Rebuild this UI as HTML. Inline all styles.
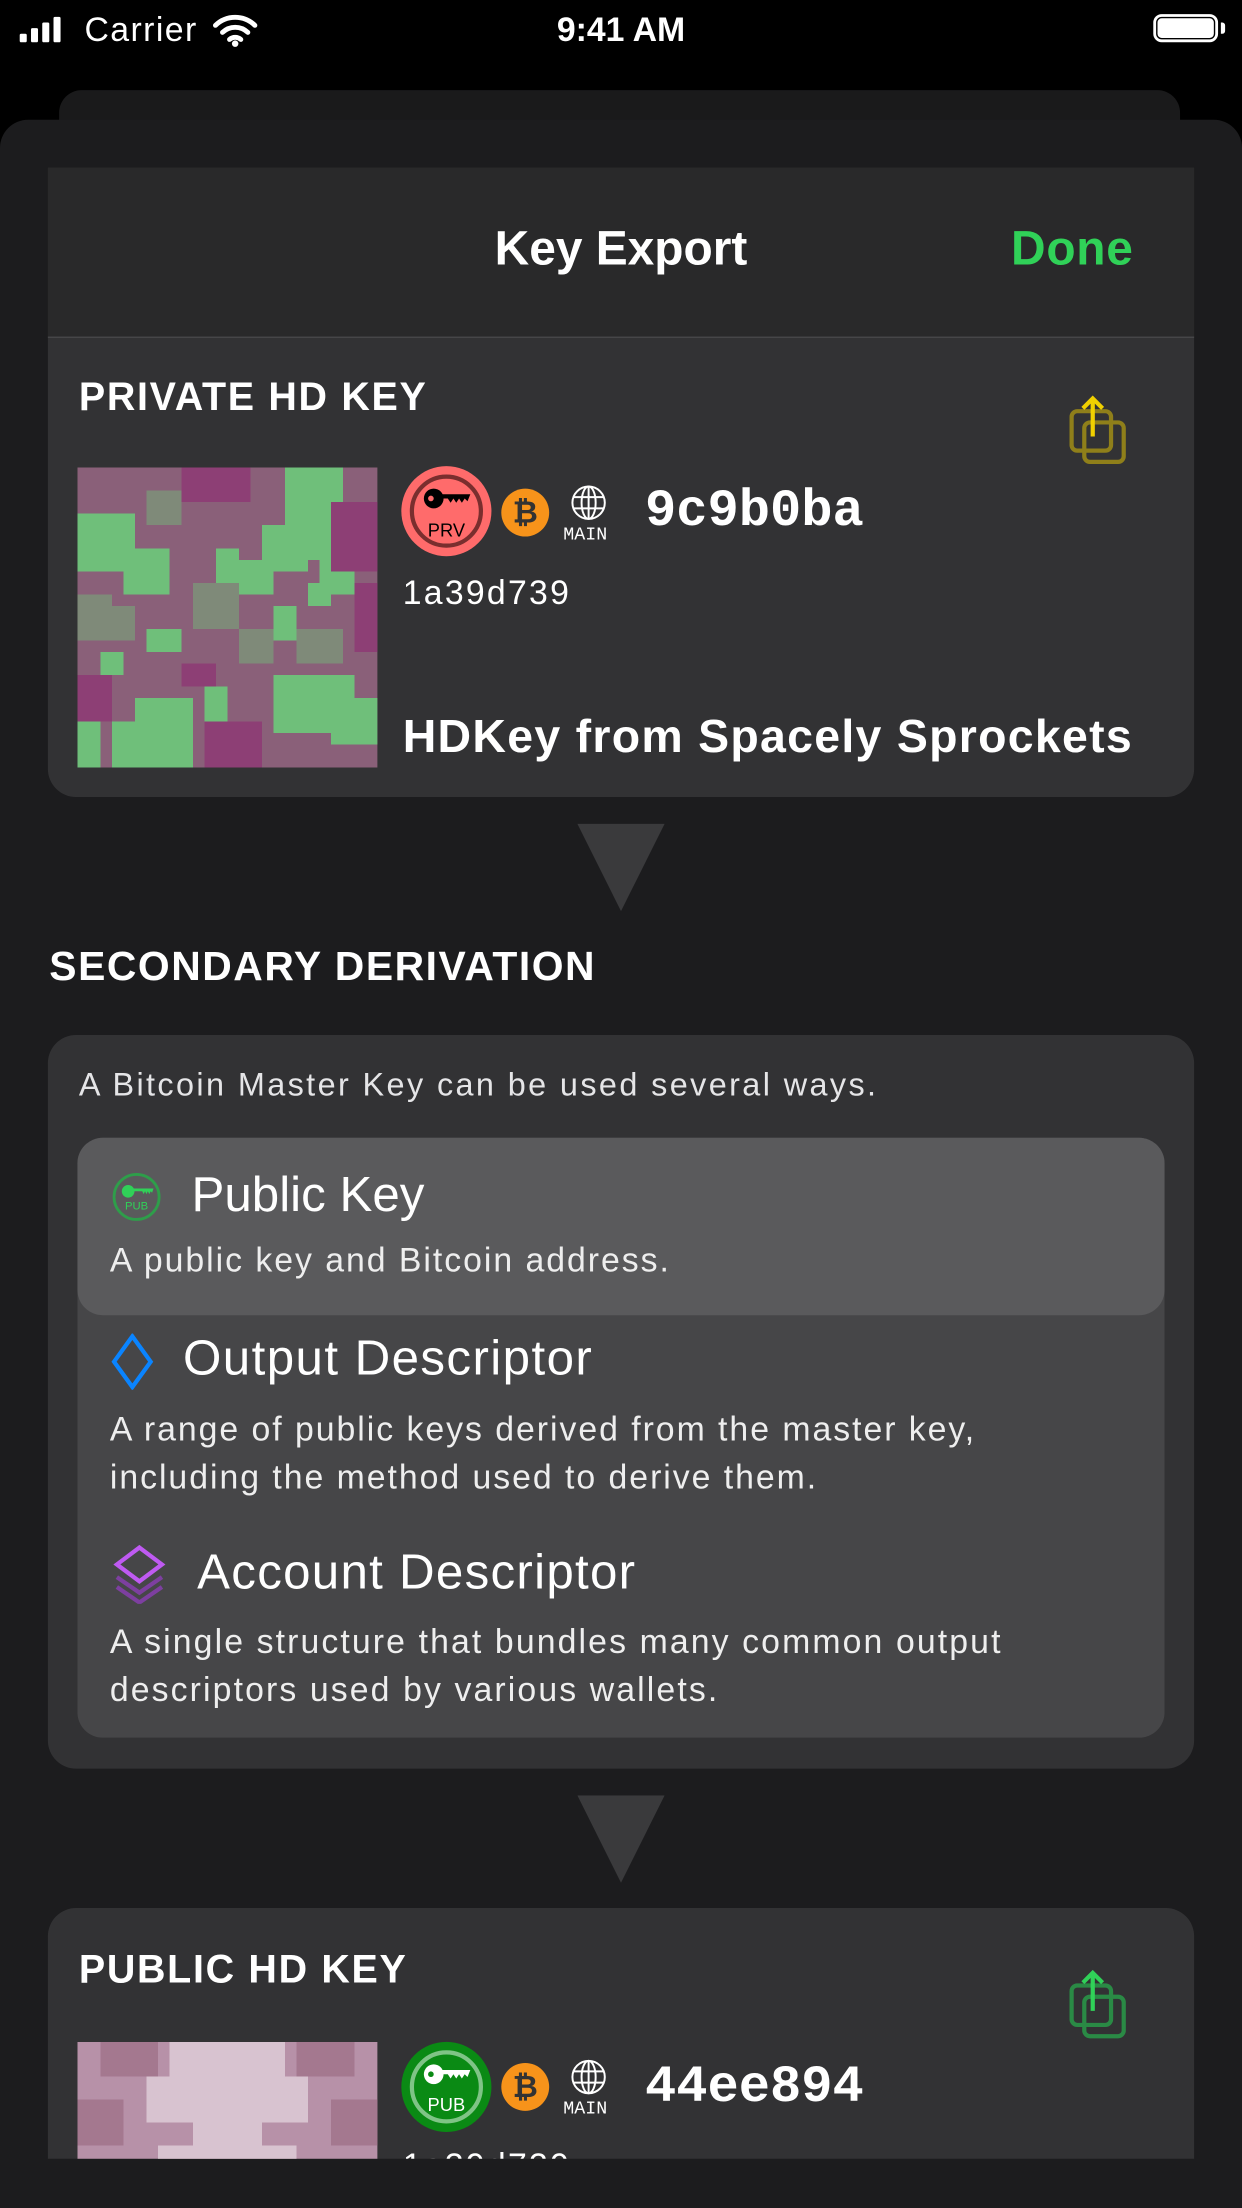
<!DOCTYPE html>
<html><head><meta charset="utf-8"><style>
html,body{margin:0;padding:0;background:#000;width:1242px;height:2208px;overflow:hidden}
#w{position:absolute;left:0;top:0;width:882px;height:1568px;overflow:hidden;transform:scale(1.408163);transform-origin:0 0;font-family:"Liberation Sans",sans-serif;color:#fff}
.a{position:absolute;white-space:nowrap}
.card{position:absolute;left:34px;width:814px;background:#323234;border-radius:20px}
.mono{font-family:"Liberation Mono","DejaVu Sans Mono",monospace}
</style></head><body><div id="w">
<div class="a" style="left:14px;top:12px;display:flex;align-items:flex-end;gap:3px">
<div style="width:5px;height:6px;background:#fff;border-radius:1px"></div><div style="width:5px;height:10px;background:#fff;border-radius:1px"></div><div style="width:5px;height:14px;background:#fff;border-radius:1px"></div><div style="width:5px;height:18px;background:#fff;border-radius:1px"></div></div>
<div class="a" style="left:60px;top:8px;font-size:24px;letter-spacing:1px">Carrier</div>
<svg class="a" style="left:150px;top:8px" width="34" height="26" viewBox="0 0 34 26"><path d="M3 10a20 20 0 0 1 28 0M8 15a13 13 0 0 1 18 0M13 20a6 6 0 0 1 8 0" stroke="#fff" stroke-width="3.5" fill="none" stroke-linecap="round"/><circle cx="17" cy="23" r="2.3" fill="#fff"/></svg>
<div class="a" style="left:0;width:882px;top:8px;text-align:center;font-size:24px;font-weight:bold">9:41 AM</div>
<div class="a" style="left:819px;top:10px;width:46px;height:20px;border:2px solid #fff;border-radius:6px;box-sizing:border-box"></div>
<div class="a" style="left:822px;top:13px;width:40px;height:14px;background:#fff;border-radius:3px"></div>
<div class="a" style="left:867px;top:16px;width:3px;height:8px;background:#fff;border-radius:0 2px 2px 0"></div>
<div class="a" style="left:42px;top:64px;width:796px;height:60px;background:#1a1a1b;border-radius:16px"></div>
<div class="a" style="left:0;top:85px;width:882px;height:1483px;background:#1c1c1e;border-radius:20px 20px 0 0"></div>
<div class="a" style="left:34px;top:119px;width:814px;height:120px;background:#29292a;border-bottom:1px solid #48484a"></div>
<div class="a" style="left:0;width:882px;top:158px;text-align:center;font-size:34px;font-weight:bold">Key Export</div>
<div class="a" style="left:718px;top:158px;font-size:34px;font-weight:bold;color:#30d158;letter-spacing:0.5px">Done</div>
<div class="card" style="top:240px;height:326px;border-radius:0 0 20px 20px"></div>
<div class="a" style="left:56px;top:266px;font-size:28px;font-weight:bold;letter-spacing:1.2px">PRIVATE HD KEY</div>
<svg class="a" style="left:756px;top:280px" width="48" height="52" viewBox="0 0 48 52"><rect x="5" y="12" width="28" height="28" rx="4" fill="none" stroke="#8f7f1a" stroke-width="3"/><rect x="14" y="20" width="28" height="28" rx="4" fill="none" stroke="#8f7f1a" stroke-width="3"/><path d="M20 30V3M13 10l7-7 7 7" stroke="#f0d000" stroke-width="3" fill="none"/></svg>
<svg class="a" style="left:55px;top:332px" width="213" height="213" viewBox="0 0 26 26" shape-rendering="crispEdges">
<rect width="26" height="26" fill="#8a6079"/>
<g fill="#6fbf7a"><rect x="0" y="4" width="5" height="5"/><rect x="4" y="7" width="4" height="4"/><rect x="18" y="0" width="5" height="8"/><rect x="16" y="5" width="4" height="4"/><rect x="21" y="7" width="3" height="4"/><rect x="14" y="8" width="3" height="3"/><rect x="12" y="7" width="2" height="4"/><rect x="17" y="12" width="2" height="3"/><rect x="6" y="14" width="3" height="2"/><rect x="0" y="21" width="2" height="5"/><rect x="5" y="20" width="5" height="6"/><rect x="3" y="22" width="3" height="4"/><rect x="17" y="18" width="7" height="5"/><rect x="22" y="20" width="4" height="4"/><rect x="11" y="19" width="2" height="4"/><rect x="20" y="10" width="2" height="2"/><rect x="2" y="16" width="2" height="2"/></g>
<g fill="#8d3f75"><rect x="9" y="0" width="6" height="3"/><rect x="22" y="3" width="4" height="6"/><rect x="24" y="10" width="2" height="6"/><rect x="0" y="18" width="3" height="4"/><rect x="11" y="22" width="5" height="4"/><rect x="9" y="17" width="3" height="2"/></g>
<g fill="#7f8a79"><rect x="6" y="2" width="3" height="3"/><rect x="10" y="10" width="4" height="4"/><rect x="0" y="11" width="3" height="4"/><rect x="19" y="14" width="4" height="3"/><rect x="14" y="14" width="3" height="3"/><rect x="3" y="12" width="2" height="3"/></g>
</svg>
<div class="a" style="left:285px;top:331px;width:64px;height:64px;border-radius:50%;background:#ff6b6b"></div>
<div class="a" style="left:291px;top:337px;width:52px;height:52px;border-radius:50%;border:3px solid #7a2e2e;box-sizing:border-box"></div>
<svg class="a" style="left:300px;top:344px" width="36" height="22" viewBox="0 0 36 22"><circle cx="8" cy="10" r="7" fill="#000"/><circle cx="6" cy="10" r="2" fill="#ff6b6b"/><path d="M12 7h22l-2 5-2-2-2 3-2-3-2 3-2-3-2 3-2-3h-6z" fill="#000"/></svg>
<div class="a" style="left:285px;top:369px;width:64px;text-align:center;font-size:13px;color:#000">PRV</div>
<div class="a" style="left:356px;top:347px;width:34px;height:34px;border-radius:50%;background:#f7931a;text-align:center;font-weight:bold;font-size:22px;line-height:34px;color:#333">₿</div>
<svg class="a" style="left:405px;top:344px" width="26" height="26" viewBox="0 0 26 26" fill="none" stroke="#fff" stroke-width="1.4"><circle cx="13" cy="13" r="11.5"/><ellipse cx="13" cy="13" rx="5" ry="11.5"/><path d="M13 1.5v23M2 9h22M2 17h22"/></svg>
<div class="a mono" style="left:400px;top:372px;font-size:13px">MAIN</div>
<div class="a mono" style="left:458px;top:343px;font-size:37px;font-weight:bold">9c9b0ba</div>
<div class="a" style="left:286px;top:408px;font-size:24px;letter-spacing:1.6px">1a39d739</div>
<div class="a" style="left:286px;top:504px;font-size:33px;font-weight:bold;letter-spacing:0.9px">HDKey from Spacely Sprockets</div>
<svg class="a" style="left:410px;top:585px" width="62" height="62"><path d="M0 0h62L31 62z" fill="#3a3a3c"/></svg>
<div class="a" style="left:35px;top:671px;font-size:29px;font-weight:bold;letter-spacing:1.1px">SECONDARY DERIVATION</div>
<div class="card" style="top:735px;height:521px"></div>
<div class="a" style="left:56px;top:757px;font-size:23px;color:#e5e5e7;letter-spacing:1.7px">A Bitcoin Master Key can be used several ways.</div>
<div class="a" style="left:55px;top:808px;width:772px;height:426px;background:#464648;border-radius:18px"></div>
<div class="a" style="left:55px;top:808px;width:772px;height:126px;background:#5a5a5c;border-radius:18px"></div>
<div class="a" style="left:80px;top:833px;width:34px;height:34px;border-radius:50%;border:2.5px solid #2e9e4a;box-sizing:border-box"></div>
<svg class="a" style="left:86px;top:840px" width="24" height="14" viewBox="0 0 24 14"><circle cx="5" cy="6" r="4.5" fill="#30d158"/><path d="M8 4h15l-1 3-1-1-1 2-1-2-1 2-1-2-1 2-1-2h-6z" fill="#30d158"/></svg>
<div class="a" style="left:80px;top:852px;width:34px;text-align:center;font-size:8px;color:#30d158">PUB</div>
<div class="a" style="left:136px;top:829px;font-size:35px">Public Key</div>
<div class="a" style="left:78px;top:882px;font-size:24px;color:#eee;letter-spacing:1.4px">A public key and Bitcoin address.</div>
<svg class="a" style="left:78px;top:947px" width="32" height="40" viewBox="0 0 32 40"><path d="M16 2L29 20 16 38 3 20z" fill="none" stroke="#0a84ff" stroke-width="3"/></svg>
<div class="a" style="left:130px;top:945px;font-size:35px;letter-spacing:1px">Output Descriptor</div>
<div class="a" style="left:78px;top:999px;font-size:24px;line-height:34px;color:#eee;letter-spacing:1.4px">A range of public keys derived from the master key,<br>including the method used to derive them.</div>
<svg class="a" style="left:78px;top:1097px" width="42" height="42" viewBox="0 0 42 42"><path d="M21 2L37 14 21 26 5 14z" fill="none" stroke="#bf5af2" stroke-width="3"/><path d="M5 23l16 11 16-11M5 30l16 11 16-11" fill="none" stroke="#7d3fa0" stroke-width="3"/></svg>
<div class="a" style="left:140px;top:1097px;font-size:35px;letter-spacing:0.9px">Account Descriptor</div>
<div class="a" style="left:78px;top:1150px;font-size:24px;line-height:34px;color:#eee;letter-spacing:1.5px">A single structure that bundles many common output<br>descriptors used by various wallets.</div>
<svg class="a" style="left:410px;top:1275px" width="62" height="62"><path d="M0 0h62L31 62z" fill="#3a3a3c"/></svg>
<div style="position:absolute;left:0;top:1355px;width:882px;height:178px;overflow:hidden">
<div class="card" style="top:0;height:260px"></div>
<div class="a" style="left:56px;top:28px;font-size:28px;font-weight:bold;letter-spacing:1.2px">PUBLIC HD KEY</div>
<svg class="a" style="left:756px;top:43px" width="48" height="52" viewBox="0 0 48 52"><rect x="5" y="12" width="28" height="28" rx="4" fill="none" stroke="#2a8a45" stroke-width="3"/><rect x="14" y="20" width="28" height="28" rx="4" fill="none" stroke="#2a8a45" stroke-width="3"/><path d="M20 30V3M13 10l7-7 7 7" stroke="#30d158" stroke-width="3" fill="none"/></svg>
<svg class="a" style="left:55px;top:95px" width="213" height="213" viewBox="0 0 26 26" shape-rendering="crispEdges">
<rect width="26" height="26" fill="#b791a8"/>
<g fill="#d8c3d0"><rect x="8" y="0" width="10" height="3"/><rect x="6" y="3" width="14" height="4"/><rect x="10" y="6" width="6" height="4"/><rect x="7" y="9" width="12" height="5"/><rect x="9" y="13" width="8" height="6"/><rect x="4" y="12" width="3" height="3"/><rect x="19" y="12" width="3" height="3"/></g>
<g fill="#a4788f"><rect x="2" y="0" width="5" height="3"/><rect x="19" y="0" width="5" height="3"/><rect x="0" y="5" width="4" height="4"/><rect x="22" y="5" width="4" height="4"/></g>
<g fill="#85526f"><rect x="3" y="15" width="3" height="3"/><rect x="20" y="15" width="3" height="3"/></g>
</svg>
<div class="a" style="left:285px;top:95px;width:64px;height:64px;border-radius:50%;background:#0a8a14"></div>
<div class="a" style="left:291px;top:101px;width:52px;height:52px;border-radius:50%;border:3px solid #7fc486;box-sizing:border-box"></div>
<svg class="a" style="left:300px;top:108px" width="36" height="22" viewBox="0 0 36 22"><circle cx="8" cy="10" r="7" fill="#fff"/><circle cx="6" cy="10" r="2" fill="#0a8a14"/><path d="M12 7h22l-2 5-2-2-2 3-2-3-2 3-2-3-2 3-2-3h-6z" fill="#fff"/></svg>
<div class="a" style="left:285px;top:132px;width:64px;text-align:center;font-size:13px;color:#fff">PUB</div>
<div class="a" style="left:356px;top:110px;width:34px;height:34px;border-radius:50%;background:#f7931a;text-align:center;font-weight:bold;font-size:22px;line-height:34px;color:#333">₿</div>
<svg class="a" style="left:405px;top:107px" width="26" height="26" viewBox="0 0 26 26" fill="none" stroke="#fff" stroke-width="1.4"><circle cx="13" cy="13" r="11.5"/><ellipse cx="13" cy="13" rx="5" ry="11.5"/><path d="M13 1.5v23M2 9h22M2 17h22"/></svg>
<div class="a mono" style="left:400px;top:135px;font-size:13px">MAIN</div>
<div class="a mono" style="left:458px;top:107px;font-size:37px;font-weight:bold">44ee894</div>
<div class="a" style="left:286px;top:170px;font-size:24px;letter-spacing:1.6px">1a39d739</div>
</div>
</div></body></html>
